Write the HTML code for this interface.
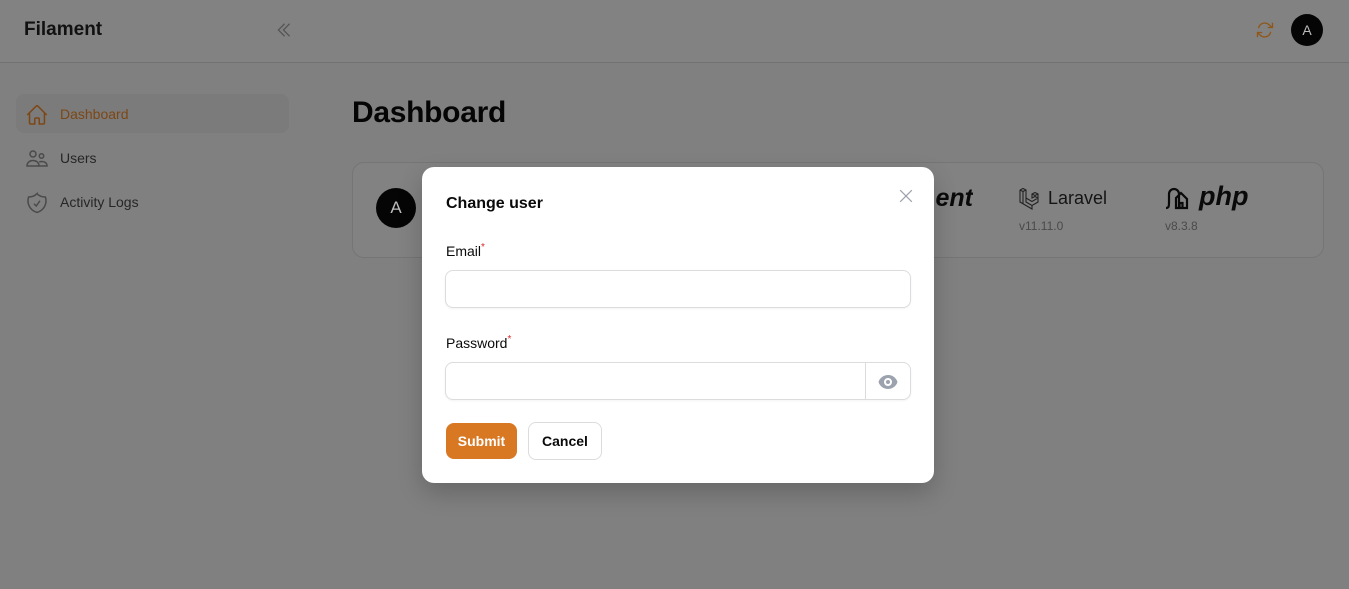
<!DOCTYPE html>
<html><head><meta charset="utf-8"><style>
*{box-sizing:border-box;margin:0;padding:0}
body{width:1349px;height:589px;overflow:hidden;background:#808080;font-family:"Liberation Sans",sans-serif;position:relative;color:#0a0a0a}
.hdr{position:absolute;left:0;top:0;width:1349px;height:63px;background:#828282;border-bottom:1px solid #727272}
.abs{position:absolute}
.nav{position:absolute;left:16px;height:39px;width:273px;border-radius:8px;font-size:14px;color:#262626}
.nav span{position:absolute;left:44px;top:12px}
.nav svg{position:absolute;left:9px;top:9px}
.card{position:absolute;left:352px;top:162px;width:972px;height:96px;background:#828282;border:1px solid #757575;border-radius:12px}
.modal{position:absolute;left:422px;top:167px;width:512px;height:316px;background:#fff;border-radius:12px;box-shadow:0 10px 25px rgba(0,0,0,.2)}
.lbl{position:absolute;left:24px;font-size:14px;color:#0a0a0a}
.lbl i{color:#dc2626;font-style:normal;font-size:10px;position:relative;top:-6px}
.inp{position:absolute;left:23px;width:466px;height:38px;border:1px solid #dcdcdf;border-radius:8px;box-shadow:0 1px 2px rgba(0,0,0,.05)}
</style></head><body>
<div class="hdr"></div>
<div class="abs" style="left:24px;top:19px;font-size:19px;font-weight:bold;color:#111">Filament</div>
<svg class="abs" style="left:274px;top:20px" width="20" height="20" viewBox="0 0 24 24" fill="none" stroke="#555" stroke-width="1.5"><path d="M18.75 19.5l-7.5-7.5 7.5-7.5M12.75 19.5l-7.5-7.5 7.5-7.5"/></svg>
<svg class="abs" style="left:1255px;top:20px" width="20" height="20" viewBox="0 0 24 24" fill="none" stroke="#8f5719" stroke-width="1.6" stroke-linecap="round"><path d="M16 9h5V4M3 15v5M3 15h5m-5 0l3.2 3.2a7.5 7.5 0 0012.5-3.4M4.4 9.2a7.5 7.5 0 0112.5-3.4L20.3 9"/></svg>
<div class="abs" style="left:1291px;top:14px;width:32px;height:32px;border-radius:50%;background:#050505;color:#bbb;font-size:14px;text-align:center;line-height:32px">A</div>

<div class="nav" style="top:94px;background:#7b7b7b;color:#7d4715"><svg width="24" height="24" viewBox="0 0 24 24" fill="none" stroke="#7d4715" stroke-width="1.5"><path d="M2.25 12l8.95-8.95a1.1 1.1 0 011.6 0L21.75 12M4.5 9.75v10.1c0 .6.5 1.1 1.1 1.1H9.75v-4.9c0-.6.5-1.1 1.1-1.1h2.3c.6 0 1.1.5 1.1 1.1V21h4.1c.6 0 1.1-.5 1.1-1.1V9.75"/></svg><span>Dashboard</span></div>
<div class="nav" style="top:138px"><svg width="24" height="24" viewBox="0 0 24 24" fill="none" stroke="#4a4a4a" stroke-width="1.5"><circle cx="8" cy="7" r="3"/><circle cx="16.5" cy="9" r="2.2"/><path d="M2 19c0-3.5 2.8-5.5 6-5.5s6 2 6 5.5zM14 19h8c0-3-2.3-4.5-5-4.5-1 0-2 .2-2.8.6"/></svg><span>Users</span></div>
<div class="nav" style="top:182px"><svg width="24" height="24" viewBox="0 0 24 24" fill="none" stroke="#4a4a4a" stroke-width="1.5"><path d="M9 12.75L11.25 15 15 9.75M12 2.7A12 12 0 013.6 6 12 12 0 003 9.75c0 5.6 3.8 10.3 9 11.6 5.2-1.3 9-6 9-11.6 0-1.3-.2-2.6-.6-3.7h-.2c-3.2 0-6.1-1.2-8.2-3.3z"/></svg><span>Activity Logs</span></div>

<div class="abs" style="left:352px;top:96px;font-size:30px;font-weight:bold;color:#050505;letter-spacing:-0.3px">Dashboard</div>
<div class="card"></div>
<div class="abs" style="left:376px;top:188px;width:40px;height:40px;border-radius:50%;background:#050505;color:#bbb;font-size:17px;text-align:center;line-height:40px">A</div>
<div class="abs" style="left:925px;top:184px;font-size:25px;font-weight:bold;font-style:italic;color:#0a0a0a;width:48px;overflow:hidden;text-align:right">ent</div>
<svg class="abs" style="left:1018px;top:186px" width="24" height="24" viewBox="0 0 24 24" fill="none" stroke="#222" stroke-width="1.1"><path d="M2 4l3-1.5L8 4v12l6 3.5 6-3.5v-4l-6 3.5-6-3.5M2 4v12l6 3.5 6 3.5V19.5M8 4l-3 1.5L2 4M5 5.5V18M14 8l3-1.5L20 8v4l-3-1.5-3 1.5zM20 8l-3 1.5L14 8M17 9.5V10.5"/></svg>
<div class="abs" style="left:1048px;top:188px;font-size:18px;color:#151515">Laravel</div>
<div class="abs" style="left:1019px;top:219px;font-size:12px;color:#4a4a4a">v11.11.0</div>
<svg class="abs" style="left:1164px;top:185px" width="32" height="26" viewBox="0 0 32 26" fill="none" stroke="#0a0a0a" stroke-width="2.2"><path d="M2 23c3 0 3-2 3-6V9a5 5 0 0110 0v14M12 23V13l5-5 6 6v9zM15.5 23v-5h3v5"/></svg>
<div class="abs" style="left:1199px;top:181px;font-size:27px;font-weight:bold;font-style:italic;color:#0a0a0a">php</div>
<div class="abs" style="left:1165px;top:219px;font-size:12px;color:#4a4a4a">v8.3.8</div>

<div class="modal">
<div class="abs" style="left:24px;top:28px;font-size:16px;font-weight:bold;color:#0a0a0a">Change user</div>
<svg class="abs" style="left:474px;top:19px" width="20" height="20" viewBox="0 0 24 24" fill="none" stroke="#9ca3af" stroke-width="1.5"><path d="M5 5l14 14M19 5L5 19"/></svg>
<div class="lbl" style="top:76px">Email<i>*</i></div>
<div class="inp" style="top:103px"></div>
<div class="lbl" style="top:168px">Password<i>*</i></div>
<div class="inp" style="top:195px"><div class="abs" style="left:419px;top:0;width:1px;height:36px;background:#dcdcdf"></div>
<svg class="abs" style="left:432px;top:9px" width="20" height="20" viewBox="0 0 20 20" fill="#9ca3af"><circle cx="10" cy="10" r="2"/><path fill-rule="evenodd" d="M.7 10.6a1.7 1.7 0 010-1.2A10 10 0 0110 3c4.2 0 7.9 2.7 9.3 6.4.1.4.1.8 0 1.2A10 10 0 0110 17c-4.2 0-7.9-2.7-9.3-6.4zM14 10a4 4 0 11-8 0 4 4 0 018 0z"/></svg></div>
<div class="abs" style="left:24px;top:256px;width:71px;height:36px;background:#d97823;border-radius:8px;color:#fff;font-size:14px;font-weight:bold;text-align:center;line-height:36px">Submit</div>
<div class="abs" style="left:106px;top:255px;width:74px;height:38px;border:1px solid #dcdcdf;border-radius:8px;color:#0a0a0a;font-size:14px;font-weight:bold;text-align:center;line-height:36px">Cancel</div>
</div>
</body></html>
